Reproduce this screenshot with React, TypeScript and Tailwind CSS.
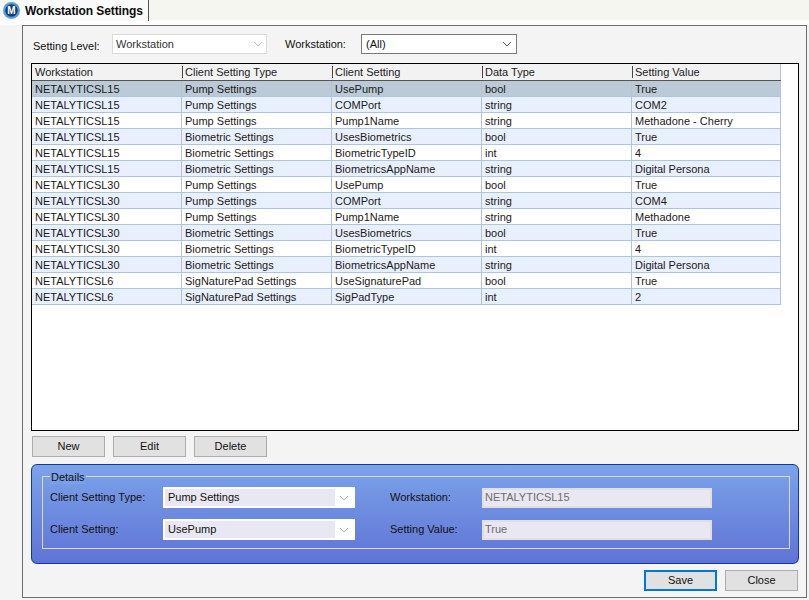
import React from "react";

const rows: string[][] = [
  ["NETALYTICSL15", "Pump Settings", "UsePump", "bool", "True"],
  ["NETALYTICSL15", "Pump Settings", "COMPort", "string", "COM2"],
  ["NETALYTICSL15", "Pump Settings", "Pump1Name", "string", "Methadone - Cherry"],
  ["NETALYTICSL15", "Biometric Settings", "UsesBiometrics", "bool", "True"],
  ["NETALYTICSL15", "Biometric Settings", "BiometricTypeID", "int", "4"],
  ["NETALYTICSL15", "Biometric Settings", "BiometricsAppName", "string", "Digital Persona"],
  ["NETALYTICSL30", "Pump Settings", "UsePump", "bool", "True"],
  ["NETALYTICSL30", "Pump Settings", "COMPort", "string", "COM4"],
  ["NETALYTICSL30", "Pump Settings", "Pump1Name", "string", "Methadone"],
  ["NETALYTICSL30", "Biometric Settings", "UsesBiometrics", "bool", "True"],
  ["NETALYTICSL30", "Biometric Settings", "BiometricTypeID", "int", "4"],
  ["NETALYTICSL30", "Biometric Settings", "BiometricsAppName", "string", "Digital Persona"],
  ["NETALYTICSL6", "SigNaturePad Settings", "UseSignaturePad", "bool", "True"],
  ["NETALYTICSL6", "SigNaturePad Settings", "SigPadType", "int", "2"],
];
const headers = ["Workstation", "Client Setting Type", "Client Setting", "Data Type", "Setting Value"];

function Chevron({ color = "#555555" }: { color?: string }) {
  return (
    <svg width="10" height="6" viewBox="0 0 10 6" fill="none">
      <path d="M1 1 L5 5 L9 1" stroke={color} strokeWidth="1" />
    </svg>
  );
}

function Btn({ label, primary }: { label: string; primary?: boolean }) {
  return (
    <div
      className={
        "w-[73px] h-[21px] flex items-center justify-center bg-[#e1e1e1] text-[#111] border " +
        (primary ? "border-2 border-[#0078d7]" : "border-[#adadad]")
      }
    >
      {label}
    </div>
  );
}

function DetailCombo({ value }: { value: string }) {
  return (
    <div className="w-[192px] h-[21px] flex bg-white border-2 border-white">
      <div className="flex-1 bg-[#e9e7f1] pl-[3px] leading-[17px] text-[#111]">{value}</div>
      <div className="w-[18px] flex items-center justify-center">
        <Chevron color="#aaaaaa" />
      </div>
    </div>
  );
}

function DetailInput({ value }: { value: string }) {
  return (
    <div className="w-[230px] h-[20px] bg-[#e9e7f1] border-2 border-[#e0e0e0] pl-[1px] leading-[15px] text-[#6d6d6d]">
      {value}
    </div>
  );
}

export default function App() {
  return (
    <div className="w-[809px] h-[600px] overflow-hidden bg-[#f4f4f4] text-[11px] text-[#111] font-['Liberation_Sans',sans-serif]">
      <div className="h-[20px] bg-[#f6f6f1] flex">
        <div className="w-[149px] h-[21px] bg-[#f9f9f9] border-r border-[#555] flex items-center pl-[3px] gap-[5px]">
          <svg width="17" height="17" viewBox="0 0 17 17">
            <circle cx="8.5" cy="8.5" r="8.5" fill="#5a9fd4" />
            <circle cx="8.5" cy="8.5" r="6.2" fill="#123c7a" />
            <text x="8.5" y="12" textAnchor="middle" fontSize="10" fontWeight="700" fill="#ffffff" fontFamily="Liberation Sans">
              M
            </text>
          </svg>
          <span className="font-bold text-[12px] text-[#0c0c0c] tracking-[-0.1px]">Workstation Settings</span>
        </div>
      </div>
      <div className="h-[5px] bg-[#fdfdfd]" />
      <div className="ml-[22px] w-[785px] h-[573px] border border-[#6e6e6e] bg-[#f4f4f4] pl-[8px] pr-[7px] pt-[8px] flex flex-col">
        <div className="h-[20px] flex items-center">
          <span className="w-[81px] pl-[2px] pt-[5px]">Setting Level:</span>
          <div className="w-[155px] h-[20px] bg-white border border-[#d9d9d9] flex items-center justify-between pl-[3px] pr-[3px]">
            <span className="text-[#333]">Workstation</span>
            <Chevron color="#bbbbbb" />
          </div>
          <span className="ml-[17px] w-[77px] pl-px">Workstation:</span>
          <div className="w-[156px] h-[20px] bg-white border border-[#7a7a7a] flex items-center justify-between pl-[4px] pr-[4px]">
            <span>(All)</span>
            <Chevron />
          </div>
        </div>

        <div className="mt-[9px] w-[768px] h-[368px] border border-black bg-white">
          <div className="w-[749px] flex h-[17px] bg-[#f2f2f2] border-b border-[#555]">
            {headers.map((h, i) => (
              <div
                key={h}
                className={(i === 4 ? "w-[149px] border-r border-[#b0c4de]" : "w-[150px]") + " flex items-center pl-[3px] relative text-[#222]"}
              >
                {i > 0 && <span className="absolute left-0 top-[2px] h-[12px] w-px bg-[#444]" />}
                {h}
              </div>
            ))}
          </div>
          {rows.map((r, i) => (
            <div
              key={i}
              className={
                "w-[749px] flex h-[16px] border-b border-[#b0c4de] " +
                (i === 0 ? "bg-[#bccad8]" : i % 2 === 1 ? "bg-[#e8f0fe]" : "bg-white")
              }
            >
              {r.map((c, j) => (
                <div
                  key={j}
                  className={
                    (j === 4 ? "w-[149px]" : "w-[150px]") +
                    " pl-[3px] leading-[17px] border-r border-[#b0c4de] text-[#1a1a1a] whitespace-nowrap"
                  }
                >
                  {c}
                </div>
              ))}
            </div>
          ))}
        </div>

        <div className="mt-[5px] pl-px flex gap-[8px]">
          <Btn label="New" />
          <Btn label="Edit" />
          <Btn label="Delete" />
        </div>

        <div className="mt-[7px] w-[768px] h-[100px] rounded-[6px] border border-[#0b39a6] bg-gradient-to-b from-[#7ba3e9] to-[#6073d5] pl-[10px] pr-[8px] pt-[11px]">
          <div className="relative h-[73px] border border-[#d8d8d8] pl-[7px] pt-[10px]">
            <span className="absolute left-[7px] -top-[7px] px-[1px] leading-[14px] text-[#111] bg-[#79a0e8]">Details</span>
            <div className="flex items-center h-[21px]">
              <span className="w-[113px]">Client Setting Type:</span>
              <DetailCombo value="Pump Settings" />
              <span className="ml-[35px] w-[92px]">Workstation:</span>
              <DetailInput value="NETALYTICSL15" />
            </div>
            <div className="flex items-center h-[21px] mt-[11px]">
              <span className="w-[113px]">Client Setting:</span>
              <DetailCombo value="UsePump" />
              <span className="ml-[35px] w-[92px]">Setting Value:</span>
              <DetailInput value="True" />
            </div>
          </div>
        </div>

        <div className="mt-[6px] pr-px flex justify-end gap-[8px]">
          <Btn label="Save" primary />
          <Btn label="Close" />
        </div>
      </div>
    </div>
  );
}
